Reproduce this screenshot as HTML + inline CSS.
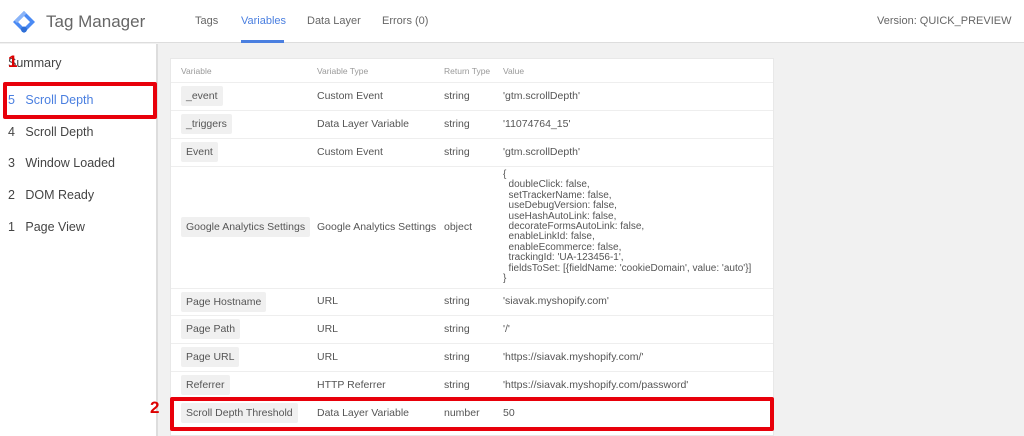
<!DOCTYPE html>
<html><head><style>
*{margin:0;padding:0;box-sizing:border-box}
body{width:1024px;height:436px;overflow:hidden;background:#f1f1f1;font-family:"Liberation Sans",sans-serif;position:relative;color:#555}
.a{position:absolute;white-space:nowrap}
#hdr{left:0;top:0;width:1024px;height:43px;background:#fff;border-bottom:1px solid #ddd}
#side{left:0;top:44px;width:158px;height:392px;background:#fff;border-right:2px solid #ddd}
.nav{font-size:11px;color:#666;top:15px}
.si{font-size:12.5px;color:#444;left:8px}
#card{left:170px;top:58px;width:604px;height:378px;background:#fff;border:1px solid #e8e8e8}
.row{position:absolute;left:0;width:602px;border-top:1px solid #eee}
.chip{position:absolute;left:10px;background:#f0f0f0;border-radius:2px;padding:4px 5px;font-size:10.5px;color:#555}
.c{position:absolute;font-size:10.5px;color:#555}
.red{position:absolute;border:4px solid #e8000a;border-radius:2px}
.num{position:absolute;color:#d00;font-weight:bold;font-size:17px}
</style></head><body>
<div class="a" id="hdr">
 <svg class="a" style="left:12px;top:10px" width="24" height="24" viewBox="0 0 24 24"><path d="M12 1 L23 12 L12 23 L1 12Z" fill="#4a8af4"/><path d="M12 6 L18 12 L12 18 L6 12Z" fill="#fff"/><path d="M12 1 L14.5 3.5 L5 13 L2.5 10.5Z" fill="#8ab4f8"/><circle cx="12" cy="19.5" r="3" fill="#2f6fd6"/></svg>
 <div class="a" style="left:46px;top:12px;font-size:17px;color:#666">Tag Manager</div>
 <div class="a nav" style="left:195px">Tags</div>
 <div class="a nav" style="left:241px;color:#4a7fe0">Variables</div>
 <div class="a" style="left:241px;top:40px;width:43px;height:3px;background:#4a7fe0"></div>
 <div class="a nav" style="left:307px">Data Layer</div>
 <div class="a nav" style="left:382px">Errors (0)</div>
 <div class="a nav" style="left:877px">Version: QUICK_PREVIEW</div>
</div>
<div class="a" id="side">
 <div class="a si" style="top:12px">Summary</div>
 <div class="a si" style="top:49px;color:#4a7fe0">5&nbsp;&nbsp;&nbsp;Scroll Depth</div>
 <div class="a si" style="top:81px">4&nbsp;&nbsp;&nbsp;Scroll Depth</div>
 <div class="a si" style="top:112px">3&nbsp;&nbsp;&nbsp;Window Loaded</div>
 <div class="a si" style="top:144px">2&nbsp;&nbsp;&nbsp;DOM Ready</div>
 <div class="a si" style="top:176px">1&nbsp;&nbsp;&nbsp;Page View</div>
</div>
<div class="a" id="card">
 <div class="c" style="left:10px;top:7px;font-size:8.5px;color:#999">Variable</div>
 <div class="c" style="left:146px;top:7px;font-size:8.5px;color:#999">Variable Type</div>
 <div class="c" style="left:273px;top:7px;font-size:8.5px;color:#999">Return Type</div>
 <div class="c" style="left:332px;top:7px;font-size:8.5px;color:#999">Value</div>

 <div class="row" style="top:23px;height:28px"><div class="chip" style="top:3px">_event</div><div class="c" style="left:146px;top:7px">Custom Event</div><div class="c" style="left:273px;top:7px">string</div><div class="c" style="left:332px;top:7px">'gtm.scrollDepth'</div></div>
 <div class="row" style="top:51px;height:28px"><div class="chip" style="top:3px">_triggers</div><div class="c" style="left:146px;top:7px">Data Layer Variable</div><div class="c" style="left:273px;top:7px">string</div><div class="c" style="left:332px;top:7px">'11074764_15'</div></div>
 <div class="row" style="top:79px;height:28px"><div class="chip" style="top:3px">Event</div><div class="c" style="left:146px;top:7px">Custom Event</div><div class="c" style="left:273px;top:7px">string</div><div class="c" style="left:332px;top:7px">'gtm.scrollDepth'</div></div>
 <div class="row" style="top:107px;height:122px"><div class="chip" style="top:50px">Google Analytics Settings</div><div class="c" style="left:146px;top:54px">Google Analytics Settings</div><div class="c" style="left:273px;top:54px">object</div>
 <div class="c" style="left:332px;top:3px;line-height:10.4px;font-size:10px;white-space:pre">{
  doubleClick: false,
  setTrackerName: false,
  useDebugVersion: false,
  useHashAutoLink: false,
  decorateFormsAutoLink: false,
  enableLinkId: false,
  enableEcommerce: false,
  trackingId: 'UA-123456-1',
  fieldsToSet: [{fieldName: 'cookieDomain', value: 'auto'}]
}</div></div>
 <div class="row" style="top:229px;height:27px"><div class="chip" style="top:3px">Page Hostname</div><div class="c" style="left:146px;top:6px">URL</div><div class="c" style="left:273px;top:6px">string</div><div class="c" style="left:332px;top:6px">'siavak.myshopify.com'</div></div>
 <div class="row" style="top:256px;height:28px"><div class="chip" style="top:3px">Page Path</div><div class="c" style="left:146px;top:7px">URL</div><div class="c" style="left:273px;top:7px">string</div><div class="c" style="left:332px;top:7px">'/'</div></div>
 <div class="row" style="top:284px;height:28px"><div class="chip" style="top:3px">Page URL</div><div class="c" style="left:146px;top:7px">URL</div><div class="c" style="left:273px;top:7px">string</div><div class="c" style="left:332px;top:7px">'https://siavak.myshopify.com/'</div></div>
 <div class="row" style="top:312px;height:28px"><div class="chip" style="top:3px">Referrer</div><div class="c" style="left:146px;top:7px">HTTP Referrer</div><div class="c" style="left:273px;top:7px">string</div><div class="c" style="left:332px;top:7px">'https://siavak.myshopify.com/password'</div></div>
 <div class="row" style="top:340px;height:28px"><div class="chip" style="top:3px">Scroll Depth Threshold</div><div class="c" style="left:146px;top:7px">Data Layer Variable</div><div class="c" style="left:273px;top:7px">number</div><div class="c" style="left:332px;top:7px">50</div></div>
</div>
<div class="red" style="left:3px;top:82px;width:154px;height:37px"></div>
<div class="num" style="left:8px;top:52px">1</div>
<div class="red" style="left:170px;top:397px;width:604px;height:34px"></div>
<div class="num" style="left:150px;top:398px">2</div>
</body></html>
